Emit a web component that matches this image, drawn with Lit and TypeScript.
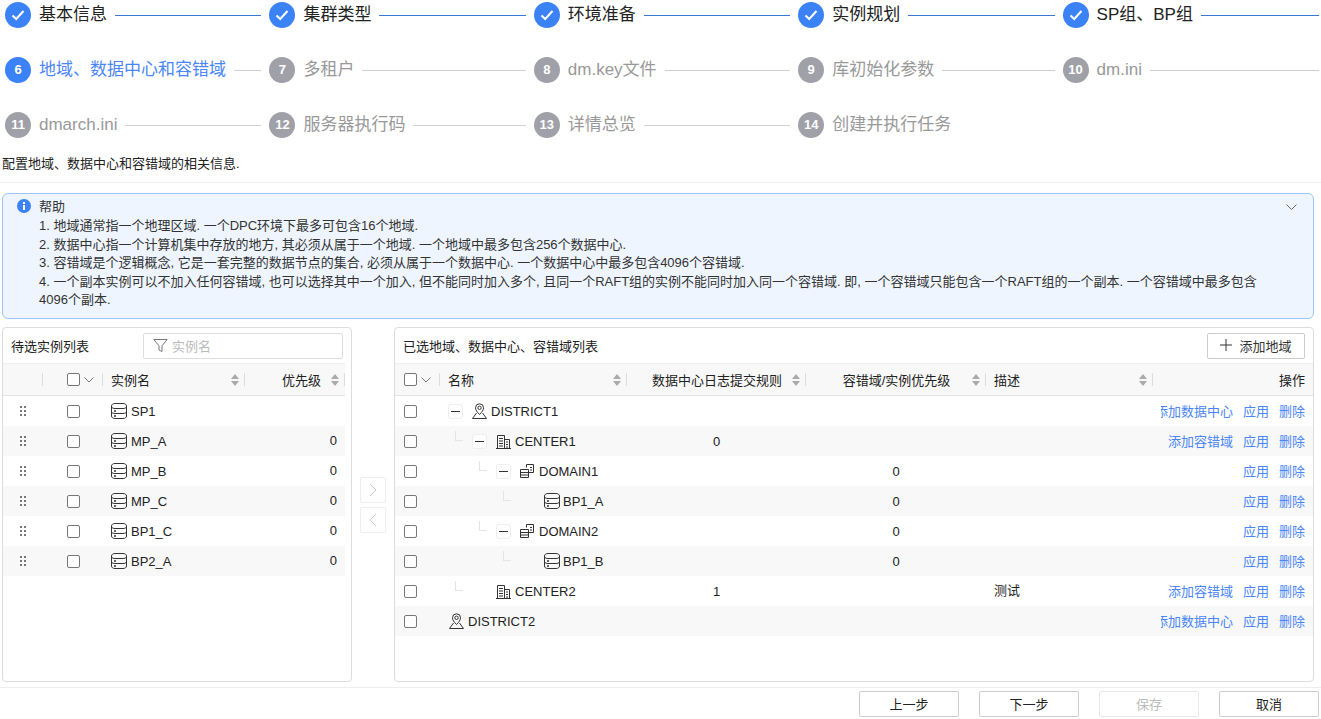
import { LitElement, html, css, svg, nothing } from 'lit';
import { customElement } from 'lit/decorators.js';

type StepState = 'done' | 'active' | 'todo';
type TreeKind = 'district' | 'center' | 'domain' | 'db';

interface TreeRow {
  level: number;
  kind: TreeKind;
  name: string;
  toggle?: boolean;
  noSlot?: boolean;
  log?: string;
  prio?: string;
  desc?: string;
  add?: string;
}

const STEPS: Array<{ label: string; state: StepState }> = [
  { label: '基本信息', state: 'done' },
  { label: '集群类型', state: 'done' },
  { label: '环境准备', state: 'done' },
  { label: '实例规划', state: 'done' },
  { label: 'SP组、BP组', state: 'done' },
  { label: '地域、数据中心和容错域', state: 'active' },
  { label: '多租户', state: 'todo' },
  { label: 'dm.key文件', state: 'todo' },
  { label: '库初始化参数', state: 'todo' },
  { label: 'dm.ini', state: 'todo' },
  { label: 'dmarch.ini', state: 'todo' },
  { label: '服务器执行码', state: 'todo' },
  { label: '详情总览', state: 'todo' },
  { label: '创建并执行任务', state: 'todo' },
];

const HELP = [
  '1. 地域通常指一个地理区域. 一个DPC环境下最多可包含16个地域.',
  '2. 数据中心指一个计算机集中存放的地方, 其必须从属于一个地域. 一个地域中最多包含256个数据中心.',
  '3. 容错域是个逻辑概念, 它是一套完整的数据节点的集合, 必须从属于一个数据中心. 一个数据中心中最多包含4096个容错域.',
  '4. 一个副本实例可以不加入任何容错域, 也可以选择其中一个加入, 但不能同时加入多个, 且同一个RAFT组的实例不能同时加入同一个容错域. 即, 一个容错域只能包含一个RAFT组的一个副本. 一个容错域中最多包含4096个副本.',
];

const INSTANCES = [
  { name: 'SP1', prio: '' },
  { name: 'MP_A', prio: '0' },
  { name: 'MP_B', prio: '0' },
  { name: 'MP_C', prio: '0' },
  { name: 'BP1_C', prio: '0' },
  { name: 'BP2_A', prio: '0' },
];

const TREE: TreeRow[] = [
  { level: 0, kind: 'district', name: 'DISTRICT1', toggle: true, add: '添加数据中心' },
  { level: 1, kind: 'center', name: 'CENTER1', toggle: true, log: '0', add: '添加容错域' },
  { level: 2, kind: 'domain', name: 'DOMAIN1', toggle: true, prio: '0' },
  { level: 3, kind: 'db', name: 'BP1_A', prio: '0' },
  { level: 2, kind: 'domain', name: 'DOMAIN2', toggle: true, prio: '0' },
  { level: 3, kind: 'db', name: 'BP1_B', prio: '0' },
  { level: 1, kind: 'center', name: 'CENTER2', log: '1', desc: '测试', add: '添加容错域' },
  { level: 0, kind: 'district', name: 'DISTRICT2', noSlot: true, add: '添加数据中心' },
];

const ICONS: Record<TreeKind, unknown> = {
  db: svg`<path d="M.5 3C.5 1.500 2 .5 4 .5h8c2 0 3.500 1 3.500 2.500v10c0 1.500-1.500 2.500-3.500 2.500H4c-2 0-3.500-1-3.500-2.500z"/><path d="M.5 4c.5 1 2 1.500 3.500 1.500h8c1.500 0 3-.5 3.500-1.500M.5 9c.5 1 2 1.500 3.500 1.500h8c1.500 0 3-.5 3.500-1.500"/><circle cx="4" cy="8" r="1" fill="currentColor" stroke="none"/><circle cx="4" cy="13" r="1" fill="currentColor" stroke="none"/>`,
  district: svg`<path d="M7.500 11.500C5 9 3.500 7 3.500 4.800a4 4 0 0 1 8 0c0 2.200-1.500 4.200-4 6.700z"/><circle cx="7.500" cy="4.800" r="1.700"/><path d="M4.500 10L.5 15.500h14l-4-5.500"/>`,
  center: svg`<path d="M0 15.500h15M1.500 15.500v-13h7v13M8.500 6.500h5v9"/><path d="M3 5.500h4M3 8h4M3 10.500h4M3 13h4M10 9h2M10 11.500h2M10 14h2"/>`,
  domain: svg`<path d="M.5 6.500h8v8h-8zM.5 9.500h8M.5 12h8"/><path d="M6.500 4.500v-3h7v8h-5M10 4.500h2M10 7h2"/>`,
};

@customElement('app-root')
export class AppRoot extends LitElement {
  private _step(step: { label: string; state: StepState }, i: number) {
    return html`
      <div class="step step--${step.state}">
        <span class="step-dot">
          ${step.state === 'done'
            ? html`<svg width="14" height="14" viewBox="0 0 14 14"><path d="M1.500 7.500l3.700 3.500 7.300-8" fill="none" stroke="#fff" stroke-width="2"/></svg>`
            : i + 1}
        </span>
        <span class="step-label">${step.label}</span>
        <span class="step-line"></span>
      </div>
    `;
  }

  private _sort() {
    return html`<svg class="sort" width="8" height="12" viewBox="0 0 8 12"><path d="M4 0l4 5H0zM4 12L0 7h8z" fill="#aaa"/></svg>`;
  }

  private _divider() {
    return html`<i class="divider"></i>`;
  }

  private _checkHead() {
    return html`
      <span class="check"></span>
      <svg class="caret" width="10" height="6" viewBox="0 0 10 6"><path d="M.5.5L5 5 9.500.5" fill="none" stroke="#777"/></svg>
    `;
  }

  private _icon(kind: TreeKind) {
    return html`<svg class="icon" width="16" height="16" viewBox="0 0 16 16" fill="none" stroke="currentColor">${ICONS[kind]}</svg>`;
  }

  private _dots() {
    return html`<span class="dots">${[0, 1, 2, 3, 4, 5].map(() => html`<i></i>`)}</span>`;
  }

  private _left() {
    return html`
      <section class="panel panel--left">
        <header class="panel-head">
          <span>待选实例列表</span>
          <label class="filter">
            <svg width="15" height="15" viewBox="0 0 15 15"><path d="M.8 1.500h13.400L9 7.800v5.700l-3-1.500V7.800z" fill="none" stroke="#777"/></svg>
            <span>实例名</span>
          </label>
        </header>
        <div class="tr th cols-left">
          <div class="cell end">${this._divider()}</div>
          <div class="cell check-cell">${this._checkHead()}${this._divider()}</div>
          <div class="cell"><span class="grow">实例名</span>${this._sort()}${this._divider()}</div>
          <div class="cell"><span class="grow right">优先级</span>${this._sort()}${this._divider()}</div>
        </div>
        ${INSTANCES.map(
          (row) => html`
            <div class="tr cols-left">
              <div class="cell center">${this._dots()}</div>
              <div class="cell check-cell"><span class="check"></span></div>
              <div class="cell named">${this._icon('db')}${row.name}</div>
              <div class="cell num">${row.prio}</div>
            </div>
          `
        )}
      </section>
    `;
  }

  private _treeName(row: TreeRow) {
    return html`
      <div class="cell named tree-name">
        ${row.level > 0
          ? html`<span class="indent" style="width:${row.level * 24}px"><i class="elbow"></i></span>`
          : nothing}
        ${row.noSlot
          ? nothing
          : html`<span class="toggle-slot">${row.toggle ? html`<span class="toggle"><i></i></span>` : nothing}</span>`}
        ${this._icon(row.kind)}${row.name}
      </div>
    `;
  }

  private _right() {
    return html`
      <section class="panel panel--right">
        <header class="panel-head">
          <span>已选地域、数据中心、容错域列表</span>
          <button class="btn btn--add">
            <svg width="12" height="12" viewBox="0 0 12 12"><path d="M6 0v12M0 6h12" stroke="#333"/></svg>
            添加地域
          </button>
        </header>
        <div class="tr th cols-right">
          <div class="cell tree-check">${this._checkHead()}${this._divider()}</div>
          <div class="cell"><span class="grow">名称</span>${this._sort()}${this._divider()}</div>
          <div class="cell"><span class="grow mid">数据中心日志提交规则</span>${this._sort()}${this._divider()}</div>
          <div class="cell"><span class="grow mid">容错域/实例优先级</span>${this._sort()}${this._divider()}</div>
          <div class="cell"><span class="grow">描述</span>${this._sort()}${this._divider()}</div>
          <div class="cell"><span class="grow right op-head">操作</span></div>
        </div>
        ${TREE.map(
          (row) => html`
            <div class="tr cols-right">
              <div class="cell tree-check"><span class="check"></span></div>
              ${this._treeName(row)}
              <div class="cell center">${row.log ?? ''}</div>
              <div class="cell center">${row.prio ?? ''}</div>
              <div class="cell desc-cell">${row.desc ?? ''}</div>
              <div class="ops">
                ${row.add ? html`<a>${row.add}</a>` : nothing}
                <a>应用</a>
                <a>删除</a>
              </div>
            </div>
          `
        )}
      </section>
    `;
  }

  override render() {
    return html`
      <div class="steps">${STEPS.map((s, i) => this._step(s, i))}</div>
      <p class="desc">配置地域、数据中心和容错域的相关信息.</p>
      <div class="help">
        <svg class="help-icon" width="14" height="14" viewBox="0 0 14 14">
          <circle cx="7" cy="7" r="7" fill="#3b82f6"/>
          <path d="M6 3h2v2H6zM6 6h2v5H6z" fill="#fff"/>
        </svg>
        <div class="help-body">
          <div class="help-title">帮助</div>
          ${HELP.map((line) => html`<div>${line}</div>`)}
        </div>
        <svg class="help-caret" width="11" height="6" viewBox="0 0 11 6"><path d="M.5.5l5 5 5-5" fill="none" stroke="#666"/></svg>
      </div>
      <div class="panels">
        ${this._left()}
        <div class="transfer">
          <button class="arrow"><svg width="8" height="14" viewBox="0 0 8 14"><path d="M1 1l6 6-6 6" fill="none" stroke="#ccc"/></svg></button>
          <button class="arrow"><svg width="8" height="14" viewBox="0 0 8 14"><path d="M7 1L1 7l6 6" fill="none" stroke="#ccc"/></svg></button>
        </div>
        ${this._right()}
      </div>
      <footer class="footer">
        <button class="btn">上一步</button>
        <button class="btn">下一步</button>
        <button class="btn btn--disabled">保存</button>
        <button class="btn">取消</button>
      </footer>
    `;
  }

  static styles = css`
    :host {
      display: flex;
      flex-direction: column;
      height: 719px;
      overflow: hidden;
      background: #fff;
      color: #222;
      font-family: 'Liberation Sans', 'Noto Sans CJK SC', sans-serif;
      font-size: 13px;
      box-sizing: border-box;
    }

    /* steps */
    .steps {
      display: grid;
      grid-template-columns: repeat(5, 1fr);
      column-gap: 8px;
      row-gap: 29px;
      margin: 2px 2px 0 5px;
    }

    .step {
      display: flex;
      align-items: center;
      gap: 8px;
      height: 26px;
      min-width: 0;
    }

    .step:last-child .step-line {
      display: none;
    }

    .step-dot {
      flex: none;
      display: inline-flex;
      align-items: center;
      justify-content: center;
      width: 26px;
      height: 26px;
      box-sizing: border-box;
      padding-bottom: 2px;
      border-radius: 50%;
      background: #a0a0a8;
      color: #fff;
      font-size: 13px;
      font-weight: 700;
    }

    .step--done .step-dot {
      padding-bottom: 0;
    }

    .step-label {
      flex: none;
      height: 24px;
      line-height: 24px;
      font-size: 17px;
      color: #999;
    }

    .step-line {
      flex: 1;
      height: 1px;
      background: #d0d0d0;
    }

    .step--done .step-dot,
    .step--active .step-dot {
      background: #3b82f6;
    }

    .step--done .step-label {
      color: #222;
    }

    .step--done .step-line {
      background: #3a78d8;
    }

    .step--active .step-label {
      color: #4a86f7;
    }

    .desc {
      height: 27px;
      margin: 17px 0 0;
      padding-left: 2px;
      line-height: 18px;
      border-bottom: 1px solid #eee;
      color: #222;
    }

    /* help */
    .help {
      display: flex;
      align-items: flex-start;
      height: 126px;
      box-sizing: border-box;
      margin: 10px 7px 0 2px;
      padding: 4px 16px 9px 14px;
      background: #eef5ff;
      border: 1px solid #9cc7f7;
      border-radius: 6px;
      color: #333;
      line-height: 18.4px;
    }

    .help-icon {
      flex: none;
      margin-top: 1px;
    }

    .help-body {
      flex: 1;
      margin-left: 8px;
      padding-right: 14px;
    }

    .help-title {
      margin-bottom: 1px;
    }

    .help-caret {
      flex: none;
      margin-top: 6px;
    }

    /* panels */
    .panels {
      flex: 1;
      min-height: 0;
      display: flex;
      margin: 8px 7px 0 2px;
    }

    .panel {
      display: flex;
      flex-direction: column;
      border: 1px solid #ddd;
      border-radius: 4px;
      box-sizing: border-box;
    }

    .panel--left {
      width: 350px;
    }

    .panel--right {
      flex: 1;
      min-width: 0;
    }

    .panel-head {
      flex: none;
      display: flex;
      align-items: center;
      justify-content: space-between;
      height: 35px;
      padding: 0 8px;
      color: #222;
    }

    .filter {
      display: flex;
      align-items: center;
      gap: 4px;
      width: 200px;
      height: 26px;
      box-sizing: border-box;
      padding-left: 9px;
      border: 1px solid #ddd;
      border-radius: 2px;
      color: #bbb;
    }

    .transfer {
      flex: none;
      width: 42px;
      display: flex;
      flex-direction: column;
      align-items: center;
      justify-content: center;
      gap: 4px;
    }

    .arrow {
      display: flex;
      align-items: center;
      justify-content: center;
      width: 26px;
      height: 26px;
      padding: 0;
      background: #fff;
      border: 1px solid #eee;
      border-radius: 2px;
    }

    /* table */
    .tr {
      display: grid;
      height: 30px;
    }

    .tr:nth-of-type(odd) {
      background: #f8f8f8;
    }

    .tr.th {
      height: 33px;
      box-sizing: border-box;
      background: #f8f8f8;
      border-top: 1px solid #eee;
      border-bottom: 1px solid #e4e4e4;
    }

    .cols-left {
      grid-template-columns: 40px 60px 142px 100px;
      width: 342px;
    }

    .cols-right {
      grid-template-columns: 45px 187px 179px 180px 167px 160px;
    }

    .cell {
      display: flex;
      align-items: center;
      min-width: 0;
      padding-left: 8px;
      white-space: nowrap;
    }

    .center {
      justify-content: center;
      padding-left: 0;
    }

    .end {
      justify-content: flex-end;
    }

    .num {
      justify-content: flex-end;
      padding: 0 8px 2px 0;
    }

    .desc-cell {
      padding-bottom: 4px;
    }

    .check-cell {
      padding-left: 24px;
    }

    .tree-check {
      padding-left: 9px;
    }

    .grow {
      flex: 1;
    }

    .right {
      text-align: right;
      padding-right: 10px;
    }

    .mid {
      text-align: center;
      padding-left: 7px;
    }

    .op-head {
      padding-right: 8px;
    }

    .sort {
      flex: none;
      margin-right: 5px;
    }

    .divider {
      flex: none;
      width: 1px;
      height: 13px;
      background: #ddd;
    }

    .check {
      flex: none;
      width: 13px;
      height: 13px;
      box-sizing: border-box;
      border: 1px solid #777;
      border-radius: 2px;
      background: #fff;
    }

    .caret {
      flex: none;
      margin-left: 4px;
      margin-right: 8px;
    }

    .dots {
      display: grid;
      grid-template-columns: 2px 2px;
      gap: 2px;
    }

    .dots i {
      width: 2px;
      height: 2px;
      background: #777;
    }

    .named {
      gap: 4px;
      color: #222;
    }

    .icon {
      flex: none;
      color: #333;
    }

    .tree-name {
      gap: 0;
    }

    .tree-name .icon {
      margin-right: 3px;
      margin-left: 1px;
    }

    .indent {
      flex: none;
      display: flex;
      justify-content: flex-end;
      align-items: center;
      padding-right: 9px;
      box-sizing: border-box;
    }

    .elbow {
      width: 8px;
      height: 10px;
      margin-bottom: 10px;
      box-sizing: border-box;
      border-left: 1px solid #e4e4e4;
      border-bottom: 1px solid #e4e4e4;
    }

    .toggle-slot {
      flex: none;
      width: 23px;
    }

    .toggle {
      display: flex;
      align-items: center;
      justify-content: center;
      width: 15px;
      height: 15px;
      box-sizing: border-box;
      background: #fff;
      border: 1px solid #eee;
      border-radius: 3px;
    }

    .toggle i {
      width: 9px;
      height: 1px;
      background: #333;
    }

    .ops {
      display: flex;
      justify-content: flex-end;
      align-items: center;
      gap: 10px;
      min-width: 0;
      margin-left: 8px;
      padding: 0 8px 1px 0;
      overflow: hidden;
      white-space: nowrap;
    }

    .ops a {
      flex: none;
      color: #4a86f7;
    }

    /* buttons */
    .btn {
      display: inline-flex;
      align-items: center;
      justify-content: center;
      width: 100px;
      height: 26px;
      padding: 0 0 1px;
      background: #fff;
      border: 1px solid #ccc;
      border-radius: 2px;
      font: inherit;
      color: #222;
    }

    .btn--add {
      gap: 7px;
      width: 98px;
      color: #333;
    }

    .btn--disabled {
      border-color: #e8e8e8;
      color: #bbb;
    }

    .footer {
      flex: none;
      display: flex;
      justify-content: flex-end;
      gap: 20px;
      height: 32px;
      box-sizing: border-box;
      margin-top: 5px;
      padding: 3px 2px 0 0;
      border-top: 1px solid #eee;
    }
  `;
}

declare global {
  interface HTMLElementTagNameMap {
    'app-root': AppRoot;
  }
}
